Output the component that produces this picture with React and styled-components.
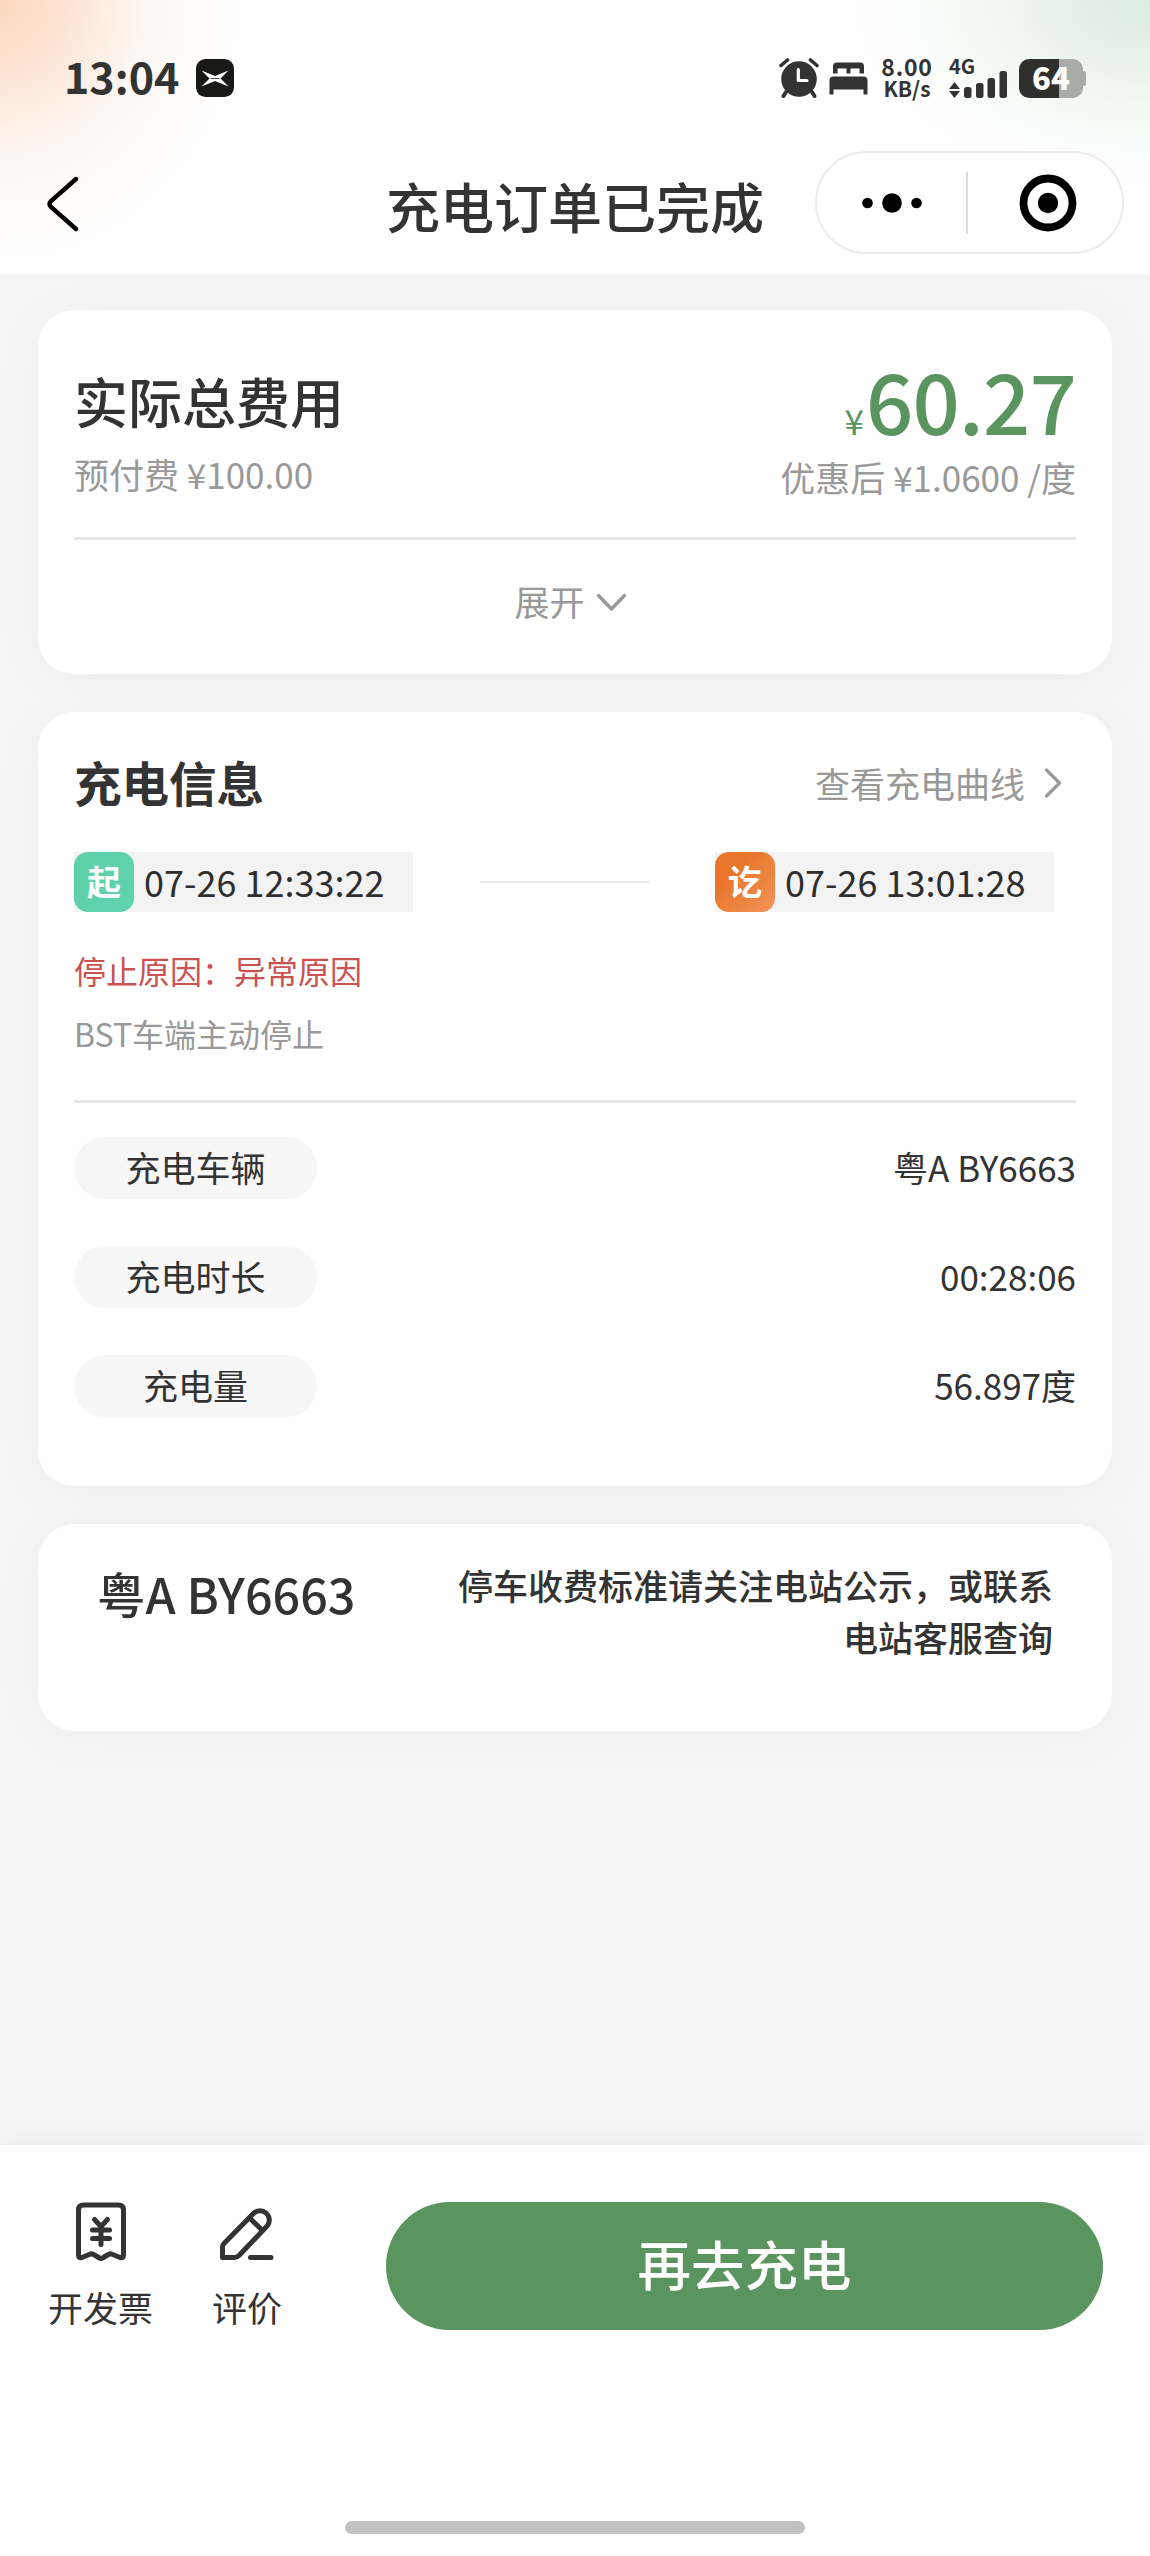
import React from "react";
import styled, { createGlobalStyle } from "styled-components";

const GlobalStyle = createGlobalStyle`
  * { box-sizing: border-box; }
  body {
    margin: 0;
    background: #f6f6f6;
    font-family: "Noto Sans CJK SC", "Noto Sans", sans-serif;
    color: #333;
  }
`;

const Page = styled.div`
  display: flex;
  flex-direction: column;
  width: 1150px;
  height: 2556px;
  overflow: hidden;
  background: #f6f6f6;
`;

const Header = styled.header`
  height: 274px;
  flex: none;
  background:
    radial-gradient(ellipse 240px 260px at 0 0, rgba(250, 212, 184, 0.92) 0%, rgba(251, 221, 200, 0.75) 30%, rgba(253, 238, 228, 0.42) 62%, rgba(255, 255, 255, 0) 100%),
    radial-gradient(ellipse 300px 190px at 100% 0, rgba(220, 235, 221, 0.95) 0%, rgba(226, 239, 227, 0.78) 35%, rgba(240, 248, 241, 0.45) 68%, rgba(255, 255, 255, 0) 100%),
    #fff;
`;

const StatusBar = styled.div`
  display: flex;
  justify-content: space-between;
  height: 131px;
  padding: 25px 64px 0 64px;
`;

const StatusGroup = styled.div`
  display: flex;
  align-items: center;
`;

const Clock = styled.span`
  font-size: 43px;
  font-weight: 700;
  line-height: 50px;
  padding-bottom: 6px;
  margin-right: 17px;
`;

const NetSpeed = styled.div`
  display: flex;
  flex-direction: column;
  align-items: center;
  width: 54px;
  margin: 0 15px 3px 12px;
  font-size: 21px;
  font-weight: 700;
  line-height: 22px;
  white-space: nowrap;
`;

const SpeedValue = styled.span`
  font-size: 23px;
  letter-spacing: 0.8px;
`;

const Signal = styled.div`
  display: flex;
  flex-direction: column;
  width: 60px;
  height: 39px;
  margin-right: 10px;
  font-size: 20px;
  font-weight: 700;
  line-height: 14px;

  svg {
    margin-top: -3px;
    flex: none;
  }
`;

const Battery = styled.div`
  display: flex;
  align-items: center;
`;

const BatteryBody = styled.div`
  width: 64px;
  height: 39px;
  border-radius: 10px;
  background: linear-gradient(90deg, #2f302e 0 40px, #a8aca8 40px);
  color: #fff;
  font-size: 31px;
  font-weight: 900;
  line-height: 35px;
  text-align: center;
`;

const BatteryTip = styled.div`
  width: 3px;
  height: 15px;
  border-radius: 0 3px 3px 0;
  background: #a8aca8;
`;

const NavBar = styled.nav`
  display: grid;
  grid-template-columns: 1fr auto 1fr;
  align-items: center;
  height: 143px;
  padding: 0 26px 0 26px;
`;

const BackButton = styled.button`
  display: flex;
  padding: 2px 0 0 19px;
  border: 0;
  background: none;
`;

const PageTitle = styled.h1`
  margin: 0;
  padding-top: 6px;
  font-size: 54px;
  font-weight: 500;
  line-height: 60px;
`;

const Capsule = styled.div`
  justify-self: end;
  display: flex;
  align-items: center;
  width: 309px;
  height: 103px;
  border: 2px solid #ebebeb;
  border-radius: 52px;
  background: #fff;
`;

const CapsuleHalf = styled.div`
  display: flex;
  justify-content: center;
  flex: 1;
  padding-left: ${(p) => p.$inset || 0}px;
`;

const CapsuleDivider = styled.div`
  width: 2px;
  height: 62px;
  background: #dcdcdc;
`;

const Content = styled.main`
  display: flex;
  flex-direction: column;
  gap: 38px;
  height: 1871px;
  padding: 36px 38px 0;
`;

const Card = styled.section`
  height: ${(p) => p.$height}px;
  padding: 0 36px;
  border-radius: 36px;
  background: #fff;
  box-shadow: 0 6px 50px rgba(0, 0, 0, 0.045);
`;

const Between = styled.div`
  display: flex;
  justify-content: space-between;
  align-items: ${(p) => p.$align || "center"};
`;

const CostSummary = styled(Between)`
  height: 226px;
`;

const CostLabel = styled.div`
  padding-top: 61px;
`;

const CostTitle = styled.h2`
  margin: 0 0 18px;
  font-size: 54px;
  font-weight: 500;
  line-height: 60px;
`;

const CostValue = styled.div`
  padding-top: 39px;
  text-align: right;
`;

const Price = styled.div`
  display: flex;
  justify-content: flex-end;
  align-items: baseline;
  gap: 3px;
  margin-bottom: 3px;
  font-size: 83px;
  font-weight: 500;
  line-height: 100px;
  letter-spacing: -0.8px;
  color: #5a945f;
`;

const Currency = styled.span`
  font-size: 35px;
  font-weight: 400;
  line-height: 35px;
`;

const Muted = styled.div`
  font-size: ${(p) => p.$size || 35}px;
  line-height: 50px;
  color: #999;
`;

const Divider = styled.div`
  height: 3px;
  background: #e6e6e6;
`;

const CostDivider = styled(Divider)`
  margin-top: 1px;
`;

const ExpandButton = styled.button`
  display: flex;
  align-items: center;
  justify-content: center;
  gap: 11px;
  width: 100%;
  height: 122px;
  padding: 0 9px 0 0;
  border: 0;
  background: none;
  font: 400 35px/50px "Noto Sans CJK SC", sans-serif;
  color: #999;

  svg { margin-top: 3px; }
`;

const SectionHead = styled(Between)`
  height: 60px;
  margin: 0 0 40px;
`;

const ChargeCard = styled(Card)`
  padding-top: 40px;
`;

const SectionTitle = styled.h2`
  margin: 0;
  font-size: 47.5px;
  font-weight: 700;
  line-height: 60px;
`;

const CurveLink = styled(Muted)`
  display: flex;
  align-items: center;
  gap: 19px;
  padding: 1px 13px 0 0;
`;

const TimeRow = styled(Between)`
  padding-right: 22px;
`;

const TimeBox = styled.div`
  display: flex;
  align-items: center;
  gap: 10px;
  width: 339px;
  height: 60px;
  background: #f3f3f3;
`;

const TimeBadge = styled.span`
  width: 60px;
  height: 60px;
  border-radius: 14px;
  background: ${(p) => p.$fill};
  color: #fff;
  font-size: 34px;
  font-weight: 700;
  line-height: 57px;
  text-align: center;
`;

const TimeText = styled.span`
  padding-bottom: 3px;
  font-size: 36px;
  line-height: 50px;
  color: #2e2e2e;
  white-space: nowrap;
`;

const TimeLink = styled.div`
  width: 169px;
  height: 2px;
  background: #e8e8e8;
`;

const StopReason = styled.div`
  margin: 36px 0 16px;
  font-size: 32px;
  line-height: 44px;
  color: #cb5250;
`;

const DetailList = styled.div`
  display: flex;
  flex-direction: column;
  gap: 47px;
  padding-top: 34px;
`;

const DetailsDivider = styled(Divider)`
  margin-top: 42px;
`;

const DetailLabel = styled.span`
  width: 243px;
  height: 62px;
  border-radius: 31px;
  background: #f7f7f7;
  font-size: 35px;
  line-height: 60px;
  text-align: center;
`;

const DetailValue = styled.span`
  height: 62px;
  font-size: 35px;
  line-height: 60px;
`;

const ParkingRow = styled(Between)`
  padding: 35px 23px 0 23px;
`;

const Plate = styled.div`
  padding-top: 4px;
  font-size: 48.5px;
  font-weight: 500;
  line-height: 60px;
`;

const ParkingNote = styled.p`
  width: 598px;
  margin: 0;
  font-size: 35px;
  font-weight: 500;
  line-height: 51.5px;
  text-align: right;
`;

const Footer = styled.footer`
  display: flex;
  flex-direction: column;
  justify-content: space-between;
  align-items: center;
  height: 411px;
  padding: 57px 0 22px;
  background: #fff;
  box-shadow: 0 -4px 26px rgba(0, 0, 0, 0.05);
`;

const Actions = styled.div`
  display: flex;
  width: 100%;
  height: 128px;
  padding: 0 47px 0 48px;
`;

const IconAction = styled.button`
  display: flex;
  flex-direction: column;
  align-items: center;
  width: ${(p) => p.$width}px;
  margin-right: ${(p) => p.$gap}px;
  padding: 0;
  border: 0;
  background: none;
  font: 400 35px/50px "Noto Sans CJK SC", sans-serif;
  color: #333;
  white-space: nowrap;

  svg { margin-bottom: 20px; flex: none; }
`;

const PrimaryButton = styled.button`
  flex: 1;
  height: 128px;
  padding: 0 0 6px;
  border: 0;
  border-radius: 64px;
  background: #5a945f;
  color: #fff;
  font: 500 53.5px/60px "Noto Sans CJK SC", sans-serif;
`;

const HomeIndicator = styled.div`
  width: 460px;
  height: 13px;
  border-radius: 7px;
  background: #c2c2c2;
`;

const AppBadgeIcon = () => (
  <svg width="38" height="38" viewBox="0 0 38 38">
    <rect width="38" height="38" rx="9.5" fill="#191917" />
    <path d="M5.5 11.500 L19 17 L32.500 11.500 L24.500 19.500 L32.500 27.500 L19 22 L5.500 27.500 L13.500 19.500 Z" fill="#fff" />
    <path d="M14.5 19.500 H23.500" stroke="#191917" strokeWidth="0.8" />
  </svg>
);

const AlarmIcon = () => (
  <svg width="40" height="40" viewBox="0 0 40 40" fill="none">
    <circle cx="20" cy="21" r="17.8" fill="#333" />
    <path d="M2 7.5 L8.5 2 M38 7.5 L31.5 2" stroke="#333" strokeWidth="3.6" strokeLinecap="round" />
    <path d="M7 34 L4.5 38 M33 34 L35.5 38" stroke="#333" strokeWidth="4" strokeLinecap="round" />
    <path d="M19.3 11.5 V22.5 H28" stroke="#fff" strokeWidth="3.2" strokeLinecap="round" strokeLinejoin="round" />
  </svg>
);

const BedIcon = () => (
  <svg width="39" height="33" viewBox="0 0 39 33" fill="#333">
    <path fillRule="evenodd" d="M4 11.5 V4.5 Q4 0.5 8 0.5 H31 Q35 0.5 35 4.5 V11.5 H30.500 V6.5 H21.5 V11.5 H17.5 V6.5 H8.5 V11.5 Z" />
    <path d="M0.5 32.5 V18.5 Q0.5 14.5 4.5 14.5 H34.5 Q38.5 14.5 38.5 18.5 V32.5 H34.5 V27.5 H4.5 V32.5 Z" />
  </svg>
);

const BarsIcon = () => (
  <svg width="60" height="28" viewBox="0 0 60 28" fill="#333">
    <path d="M5.5 12 L11 19 H0 Z M0 21 H11 L5.5 28 Z" />
    <rect x="15" y="17" width="7.5" height="11" rx="2.5" />
    <rect x="27" y="13" width="7.5" height="15" rx="2.5" />
    <rect x="38.5" y="8" width="7.5" height="20" rx="2.5" />
    <rect x="50.5" y="1" width="7.5" height="27" rx="2.5" />
  </svg>
);

const BackIcon = () => (
  <svg width="36" height="56" viewBox="0 0 36 56" fill="none">
    <path d="M31 3 L5.5 25.5 Q3.5 28 5.5 30.5 L31 53" stroke="#000" strokeWidth="4.4" strokeLinecap="round" />
  </svg>
);

const MoreIcon = () => (
  <svg width="60" height="24" viewBox="0 0 60 24">
    <circle cx="5.5" cy="12" r="5.3" />
    <circle cx="30" cy="12" r="9.8" />
    <circle cx="54.5" cy="12" r="5.3" />
  </svg>
);

const TargetIcon = () => (
  <svg width="58" height="58" viewBox="0 0 58 58">
    <circle cx="29" cy="29" r="24.5" fill="none" stroke="#000" strokeWidth="7.8" />
    <circle cx="29" cy="29" r="10.2" />
  </svg>
);

const DownIcon = () => (
  <svg width="31" height="20" viewBox="0 0 31 20" fill="none" stroke="#999" strokeWidth="3.4" strokeLinecap="round" strokeLinejoin="round">
    <path d="M2.5 2.5 L15.5 16 L28.5 2.5" />
  </svg>
);

const RightIcon = () => (
  <svg width="19" height="32" viewBox="0 0 19 32" fill="none" stroke="#999" strokeWidth="3.2" strokeLinecap="round" strokeLinejoin="round">
    <path d="M2.5 3 L15.5 16 L2.5 29" />
  </svg>
);

const InvoiceIcon = () => (
  <svg width="52" height="60" viewBox="0 0 52 60" fill="none" stroke="#333" strokeWidth="5" strokeLinecap="round" strokeLinejoin="round">
    <path d="M8.5 3 H43.5 Q48.5 3 48.5 8 V53 Q48.5 56.5 45 55.5 L36.5 52 Q34.5 51.5 32.5 53 L27.5 56 Q26 57 24.5 56 L19.5 53 Q17.5 51.5 15.5 52 L7 55.5 Q3.5 56.5 3.5 53 V8 Q3.5 3 8.5 3 Z" />
    <path d="M19.5 17.5 L26 24.5 L32.5 17.5 M17.5 28 H34.5 M17.5 36.5 H34.5 M26 25 V42.5" />
  </svg>
);

const PenIcon = () => (
  <svg width="56" height="60" viewBox="0 0 56 60" fill="none" stroke="#333" strokeWidth="5" strokeLinecap="round" strokeLinejoin="round">
    <path d="M3.5 55.500 V45 Q3.5 43 5 41.5 L34.7 11.2 A9.3 9.3 0 0 1 48.3 23.8 L20 53.5 Q18 55.500 15 55.500 Z" />
    <path d="M30.500 16 L43.500 28.5 M31.5 55.500 H52" />
  </svg>
);

const details = [
  { label: "充电车辆", value: "粤A BY6663" },
  { label: "充电时长", value: "00:28:06" },
  { label: "充电量", value: "56.897度" },
];

const AlarmSlot = styled.div`
  display: flex;
  align-items: center;
  gap: 10px;
`;

export default function App() {
  return (
    <Page>
      <GlobalStyle />
      <Header>
        <StatusBar>
          <StatusGroup>
            <Clock>13:04</Clock>
            <AppBadgeIcon />
          </StatusGroup>
          <StatusGroup>
            <AlarmSlot>
              <AlarmIcon />
              <BedIcon />
            </AlarmSlot>
            <NetSpeed>
              <SpeedValue>8.00</SpeedValue>
              <span>KB/s</span>
            </NetSpeed>
            <Signal>
              <span>4G</span>
              <BarsIcon />
            </Signal>
            <Battery>
              <BatteryBody>64</BatteryBody>
              <BatteryTip />
            </Battery>
          </StatusGroup>
        </StatusBar>
        <NavBar>
          <BackButton aria-label="返回">
            <BackIcon />
          </BackButton>
          <PageTitle>充电订单已完成</PageTitle>
          <Capsule>
            <CapsuleHalf>
              <MoreIcon />
            </CapsuleHalf>
            <CapsuleDivider />
            <CapsuleHalf $inset={5}>
              <TargetIcon />
            </CapsuleHalf>
          </Capsule>
        </NavBar>
      </Header>

      <Content>
        <Card $height={364}>
          <CostSummary $align="flex-start">
            <CostLabel>
              <CostTitle>实际总费用</CostTitle>
              <Muted>预付费 ¥100.00</Muted>
            </CostLabel>
            <CostValue>
              <Price>
                <Currency>¥</Currency>60.27
              </Price>
              <Muted>优惠后 ¥1.0600 /度</Muted>
            </CostValue>
          </CostSummary>
          <CostDivider />
          <ExpandButton>
            展开
            <DownIcon />
          </ExpandButton>
        </Card>

        <ChargeCard $height={774}>
          <SectionHead>
            <SectionTitle>充电信息</SectionTitle>
            <CurveLink>
              查看充电曲线
              <RightIcon />
            </CurveLink>
          </SectionHead>
          <TimeRow>
            <TimeBox>
              <TimeBadge $fill="linear-gradient(135deg, #5fd0a6, #5fd3b0)">起</TimeBadge>
              <TimeText>07-26 12:33:22</TimeText>
            </TimeBox>
            <TimeLink />
            <TimeBox>
              <TimeBadge $fill="linear-gradient(135deg, #e9762a 30%, #f0945a)">讫</TimeBadge>
              <TimeText>07-26 13:01:28</TimeText>
            </TimeBox>
          </TimeRow>
          <StopReason>停止原因：异常原因</StopReason>
          <Muted $size={32}>BST车端主动停止</Muted>
          <DetailsDivider />
          <DetailList>
            {details.map((d) => (
              <Between key={d.label}>
                <DetailLabel>{d.label}</DetailLabel>
                <DetailValue>{d.value}</DetailValue>
              </Between>
            ))}
          </DetailList>
        </ChargeCard>

        <Card $height={207}>
          <ParkingRow $align="flex-start">
            <Plate>粤A BY6663</Plate>
            <ParkingNote>停车收费标准请关注电站公示，或联系电站客服查询</ParkingNote>
          </ParkingRow>
        </Card>
      </Content>

      <Footer>
        <Actions>
          <IconAction $width={105} $gap={59}>
            <InvoiceIcon />
            开发票
          </IconAction>
          <IconAction $width={70} $gap={104}>
            <PenIcon />
            评价
          </IconAction>
          <PrimaryButton>再去充电</PrimaryButton>
        </Actions>
        <HomeIndicator />
      </Footer>
    </Page>
  );
}
